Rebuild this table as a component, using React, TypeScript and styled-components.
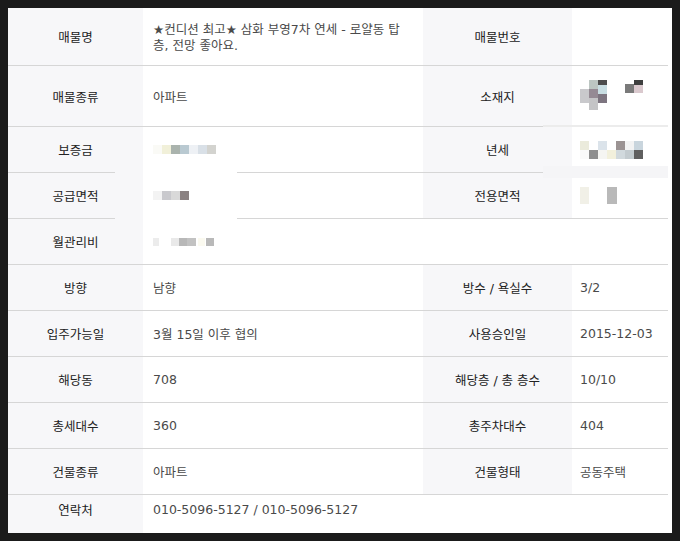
import React from "react";
import styled, { createGlobalStyle } from "styled-components";

const GlobalStyle = createGlobalStyle`
  html, body {
    margin: 0;
    padding: 0;
    background: #1b1b1b;
  }
  body {
    font-family: "DejaVu Sans", "Noto Sans CJK KR", sans-serif;
  }
`;

const Frame = styled.div`
  width: 680px;
  height: 541px;
  padding: 8px;
  box-sizing: border-box;
  background: #1b1b1b;
`;

const Panel = styled.div`
  position: relative;
  width: 664px;
  height: 525px;
  background: #fff;
  overflow: hidden;
`;

const Table = styled.div`
  width: 660px;
  display: flex;
  flex-direction: column;
  font-size: 12.5px;
`;

const Row = styled.div<{ $h: number; $last?: boolean }>`
  display: grid;
  grid-template-columns: 135px 280px 149px 96px;
  height: ${(p) => p.$h}px;
  box-sizing: border-box;
  border-bottom: ${(p) => (p.$last ? "none" : "1px solid #d6d6d6")};
`;

const Label = styled.div<{ $top?: number }>`
  display: flex;
  align-items: center;
  justify-content: center;
  background: #f7f7f9;
  color: #222;
  padding-bottom: ${(p) => p.$top ?? 0}px;
`;

const Value = styled.div<{ $span?: boolean; $top?: number }>`
  display: flex;
  align-items: center;
  padding: 0 10px ${(p) => p.$top ?? 0}px 10px;
  color: #4a4a4a;
  grid-column: ${(p) => (p.$span ? "span 3" : "auto")};
`;

const SideValue = styled(Value)`
  padding-left: 8px;
  padding-right: 4px;
`;

const TitleText = styled.div`
  line-height: 16px;
  padding-top: 2px;
  word-break: break-all;
`;

// white edit patches that hide the row lines around the blurred values
const Patch = styled.div<{ $x: number; $y: number; $w: number; $h: number; $bg: string }>`
  position: absolute;
  left: ${(p) => p.$x}px;
  top: ${(p) => p.$y}px;
  width: ${(p) => p.$w}px;
  height: ${(p) => p.$h}px;
  background: ${(p) => p.$bg};
`;

type Cell = [number, number, number, number, string];

const Mosaic = ({ w, h, cells }: { w: number; h: number; cells: Cell[] }) => (
  <svg width={w} height={h} style={{ display: "block" }}>
    {cells.map(([x, y, cw, ch, c], i) => (
      <rect key={i} x={x} y={y} width={cw} height={ch} fill={c} />
    ))}
  </svg>
);

const strip = (colors: string[], size = 9): Cell[] =>
  colors.map((c, i) => [i * size, 0, size, size, c] as Cell);

const addressCells: Cell[] = [
  [0, 9, 9, 14, "#c9c9cc"],
  [9, 0, 9, 9, "#bcc6c2"],
  [9, 9, 9, 9, "#958a94"],
  [9, 18, 9, 12, "#c4c4c6"],
  [18, 0, 9, 5, "#4d4d4d"],
  [18, 5, 9, 9, "#c8dde2"],
  [18, 14, 9, 9, "#7d7580"],
  [45, 4, 9, 9, "#7a7a7a"],
  [54, 0, 9, 5, "#3f3f3f"],
  [54, 5, 9, 8, "#dac9ce"],
];

const rentCells: Cell[] = [
  ...strip(["#ebebdc", "#ffffff", "#dbe3ea", "#ffffff", "#9b9393", "#f3f3f3", "#c9d5dd"]),
  ...strip(["#fafafa", "#8f8f8f", "#f5f5f2", "#f2f0dc", "#d1d9dd", "#c3cbcf", "#5f5f5f"]).map(
    ([x, , w, h, c]) => [x, 9, w, h, c] as Cell
  ),
];

const areaCells: Cell[] = [
  [0, 0, 9, 17, "#f1f0e7"],
  [27, 0, 10, 17, "#b9b9b9"],
];

const feeCells: Cell[] = [
  [0, 0, 6, 8, "#ececec"],
  [18, 0, 8, 8, "#e9e9e9"],
  [26, 0, 8, 8, "#b8b8b8"],
  [34, 0, 9, 8, "#c2c2c2"],
  [45, 0, 7, 8, "#fbfaf0"],
  [53, 0, 8, 8, "#b9b9b9"],
];

const gapBg = "linear-gradient(to right, #f7f7f9 28px, #ffffff 28px)";

export default function App() {
  return (
    <>
      <GlobalStyle />
      <Frame>
        <Panel>
          <Table>
            <Row $h={58}>
              <Label>매물명</Label>
              <Value>
                <TitleText>★컨디션 최고★ 삼화 부영7차 연세 - 로얄동 탑층, 전망 좋아요.</TitleText>
              </Value>
              <Label>매물번호</Label>
              <SideValue />
            </Row>
            <Row $h={61}>
              <Label>매물종류</Label>
              <Value>아파트</Value>
              <Label>소재지</Label>
              <SideValue>
                <Mosaic w={63} h={32} cells={addressCells} />
              </SideValue>
            </Row>
            <Row $h={46}>
              <Label>보증금</Label>
              <Value>
                <Mosaic
                  w={63}
                  h={9}
                  cells={strip(["#fafaf6", "#f1f0d9", "#aab3ad", "#b9c9d1", "#eef1f5", "#d9e0e7", "#d3d3cf"])}
                />
              </Value>
              <Label>년세</Label>
              <SideValue>
                <Mosaic w={63} h={18} cells={rentCells} />
              </SideValue>
            </Row>
            <Row $h={46}>
              <Label>공급면적</Label>
              <Value>
                <Mosaic w={36} h={9} cells={strip(["#f3f3f3", "#c9c9cd", "#d9d9d9", "#8b8282"])} />
              </Value>
              <Label>전용면적</Label>
              <SideValue>
                <Mosaic w={37} h={17} cells={areaCells} />
              </SideValue>
            </Row>
            <Row $h={46}>
              <Label>월관리비</Label>
              <Value $span>
                <Mosaic w={61} h={8} cells={feeCells} />
              </Value>
            </Row>
            <Row $h={46}>
              <Label>방향</Label>
              <Value>남향</Value>
              <Label>방수 / 욕실수</Label>
              <SideValue>3/2</SideValue>
            </Row>
            <Row $h={46}>
              <Label>입주가능일</Label>
              <Value>3월 15일 이후 협의</Value>
              <Label>사용승인일</Label>
              <SideValue>2015-12-03</SideValue>
            </Row>
            <Row $h={46}>
              <Label>해당동</Label>
              <Value>708</Value>
              <Label>해당층 / 총 층수</Label>
              <SideValue>10/10</SideValue>
            </Row>
            <Row $h={46}>
              <Label>총세대수</Label>
              <Value>360</Value>
              <Label>총주차대수</Label>
              <SideValue>404</SideValue>
            </Row>
            <Row $h={46}>
              <Label>건물종류</Label>
              <Value>아파트</Value>
              <Label>건물형태</Label>
              <SideValue>공동주택</SideValue>
            </Row>
            <Row $h={38} $last>
              <Label $top={10}>연락처</Label>
              <Value $span $top={10}>
                010-5096-5127 / 010-5096-5127
              </Value>
            </Row>
          </Table>
          <Patch $x={107} $y={163} $w={122} $h={3} $bg={gapBg} />
          <Patch $x={107} $y={209} $w={122} $h={3} $bg={gapBg} />
          <Patch $x={535} $y={117} $w={125} $h={2} $bg="#ececec" />
          <Patch $x={535} $y={158} $w={125} $h={12} $bg="#f5f5f7" />
        </Panel>
      </Frame>
    </>
  );
}
